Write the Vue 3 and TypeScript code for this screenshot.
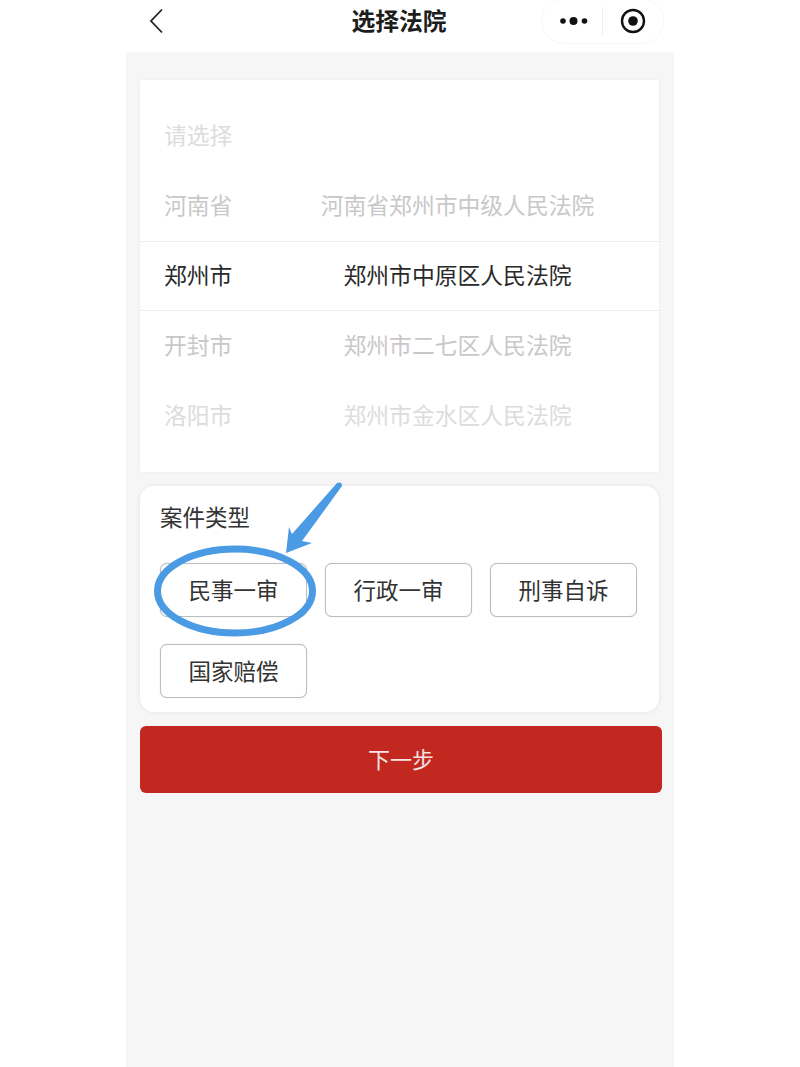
<script setup lang="ts">
interface PickerRow {
  left: string
  right: string
  tone: string
}

const rows: PickerRow[] = [
  { left: '请选择', right: '', tone: 'far' },
  { left: '河南省', right: '河南省郑州市中级人民法院', tone: 'near' },
  { left: '郑州市', right: '郑州市中原区人民法院', tone: 'active' },
  { left: '开封市', right: '郑州市二七区人民法院', tone: 'near' },
  { left: '洛阳市', right: '郑州市金水区人民法院', tone: 'far' }
]

const caseTypes: string[] = ['民事一审', '行政一审', '刑事自诉', '国家赔偿']
</script>

<template>
  <div class="page">
    <header class="nav">
      <svg class="back" width="16" height="26" viewBox="0 0 16 26" fill="none">
        <path d="M14 1.5 L3 13 L14 24.5" stroke="#222" stroke-width="1.8" />
      </svg>
      <h1 class="title">选择法院</h1>
      <div class="capsule">
        <div class="capsule-side">
          <svg class="dots" width="28" height="10" viewBox="0 0 28 10">
            <circle cx="3" cy="5" r="2.8" fill="#111" />
            <circle cx="13.5" cy="5" r="4" fill="#111" />
            <circle cx="24.5" cy="5" r="2.8" fill="#111" />
          </svg>
        </div>
        <span class="capsule-line"></span>
        <div class="capsule-side">
          <svg width="26" height="26" viewBox="0 0 26 26">
            <circle cx="13" cy="13" r="11" fill="none" stroke="#111" stroke-width="2.4" />
            <circle cx="13" cy="13" r="4.8" fill="#111" />
          </svg>
        </div>
      </div>
    </header>

    <main class="content">
      <section class="picker">
        <div v-for="row in rows" :key="row.left" class="row" :class="row.tone">
          <span class="row-left">{{ row.left }}</span>
          <span class="row-right">{{ row.right }}</span>
        </div>
      </section>

      <section class="types">
        <div class="types-title">案件类型</div>
        <div class="types-grid">
          <button v-for="item in caseTypes" :key="item" class="type-btn" type="button">{{ item }}</button>
        </div>
      </section>

      <button class="next" type="button">下一步</button>
    </main>

    <svg class="mark" width="548" height="200" viewBox="0 0 548 200" fill="none">
      <ellipse cx="109" cy="111" rx="77.5" ry="42" stroke="#4a9be4" stroke-width="7" />
      <path d="M160 73 L163 47 L166 54 L211 3 Q216 1 216 6 L176 61 L186 63 Z" fill="#4a9be4" />
    </svg>
  </div>
</template>

<style>
html,
body {
  margin: 0;
  background: #ffffff;
}
</style>

<style scoped>
.page {
  position: relative;
  width: 548px;
  height: 1067px;
  margin: 0 auto;
  background: #f6f6f6;
  overflow: hidden;
  font-family: "Liberation Sans", "Noto Sans CJK SC", sans-serif;
}

.nav {
  position: relative;
  display: flex;
  align-items: center;
  justify-content: center;
  height: 52px;
  padding-bottom: 9px;
  box-sizing: border-box;
  background: #ffffff;
}

.back {
  position: absolute;
  left: 22px;
  top: 8px;
}

.title {
  margin: 0;
  font-size: 23.8px;
  line-height: 32px;
  font-weight: 700;
  color: #1d1d1d;
  transform: translateX(-1px);
}

.capsule {
  position: absolute;
  right: 10px;
  top: -2px;
  display: flex;
  align-items: center;
  width: 123px;
  height: 46px;
  box-sizing: border-box;
  border: 1px solid #f7f7f7;
  border-radius: 23px;
  background: #ffffff;
}

.capsule-side {
  display: flex;
  flex: 1;
  align-items: center;
  justify-content: center;
}

.dots {
  margin-left: 4px;
}

.capsule-line {
  width: 1px;
  height: 28px;
  background: #eeeeee;
}

.content {
  display: flex;
  flex-direction: column;
  padding: 28px 12px 0 14px;
}

.picker {
  width: 519px;
  height: 392px;
  padding-top: 21px;
  box-sizing: border-box;
  background: #ffffff;
  border-radius: 3px;
  box-shadow: 0 0 4px rgba(0, 0, 0, 0.05);
}

.row {
  display: flex;
  align-items: center;
  height: 70px;
  padding-bottom: 4px;
  box-sizing: border-box;
  font-size: 22.8px;
}

.row-left {
  width: 116px;
  padding-left: 24px;
  box-sizing: border-box;
  flex: none;
}

.row-right {
  flex: 1;
  text-align: center;
  white-space: nowrap;
}

.far {
  color: #dcdcdc;
}

.near {
  color: #c8c8c8;
}

.active {
  color: #2a2a2a;
  border-top: 1px solid #ececec;
  border-bottom: 1px solid #ececec;
}

.types {
  width: 519px;
  height: 226px;
  margin-top: 14px;
  padding: 18px 20px 0;
  box-sizing: border-box;
  background: #ffffff;
  border-radius: 14px;
  box-shadow: 0 0 4px rgba(0, 0, 0, 0.08);
}

.types-title {
  font-size: 22.5px;
  line-height: 30px;
  color: #333333;
}

.types-grid {
  display: grid;
  grid-template-columns: repeat(3, 147px);
  column-gap: 18px;
  row-gap: 27px;
  margin-top: 29px;
}

.type-btn {
  height: 54px;
  padding: 0 0 3px;
  border: 1px solid #bdbdbd;
  border-radius: 7px;
  background: #ffffff;
  box-shadow: 0 0 1px #c4c4c4;
  color: #333333;
  font-family: inherit;
  font-size: 22.5px;
}

.next {
  width: 522px;
  height: 67px;
  margin-top: 14px;
  padding: 0 0 4px;
  border: none;
  border-radius: 6px;
  background: #c22820;
  color: #f4e3e0;
  font-family: inherit;
  font-size: 22px;
}

.mark {
  position: absolute;
  left: 0;
  top: 480px;
  pointer-events: none;
}
</style>
